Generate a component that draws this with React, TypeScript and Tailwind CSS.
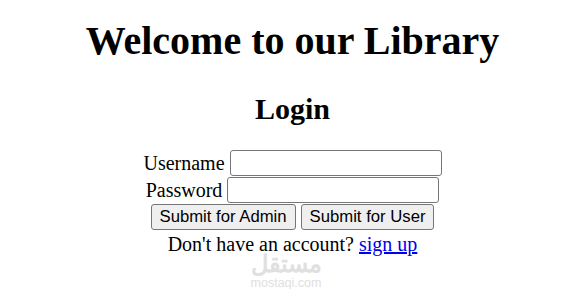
export default function App() {
  return (
    <div className="relative h-[289px] w-[572px] overflow-hidden bg-white pl-[13px] text-black font-['Liberation_Serif',serif] text-[20px]">
      {/* Page heading */}
      <h1 className="mt-[18px] text-center text-[40px] font-bold leading-[46px]">Welcome to our Library</h1>
      <h2 className="mt-[27px] text-center text-[30px] font-bold leading-[35px]">Login</h2>

      {/* Login form */}
      <form className="mt-[24px] flex flex-col items-center leading-[23px]">
        <div className="flex items-center gap-[5px]">
          <label>Username</label>
          <input type="text" className="h-[26px] w-[212px] rounded-[3px] border border-[#767676] px-[2px]" />
        </div>
        <div className="mt-[1px] flex items-center gap-[5px]">
          <label>Password</label>
          <input type="password" className="h-[26px] w-[212px] rounded-[3px] border border-[#767676] px-[2px]" />
        </div>
        <div className="mt-[1px] flex items-center gap-[5px] font-['Liberation_Sans',sans-serif] text-[16.7px]">
          <button type="button" className="h-[26px] rounded-[3px] border border-[#767676] bg-[#efefef] px-[8px] leading-[20px]">Submit for Admin</button>
          <button type="button" className="h-[26px] rounded-[3px] border border-[#767676] bg-[#efefef] px-[8px] leading-[20px]">Submit for User</button>
        </div>
        <p className="mt-[3.5px] leading-[20px]">
          Don't have an account? <a href="#" className="text-[#0000ee] underline">sign up</a>
        </p>
      </form>

      {/* Watermark */}
      <div className="pointer-events-none absolute left-[250px] top-[253px] flex w-[72px] flex-col items-center text-[#e0e0e0] font-['Liberation_Sans',sans-serif]">
        <span className="text-[24px] font-bold leading-[22px]" dir="rtl">مستقل</span>
        <span className="mt-[2px] text-[12.5px] leading-[12px]">mostaqi.com</span>
      </div>
    </div>
  );
}
